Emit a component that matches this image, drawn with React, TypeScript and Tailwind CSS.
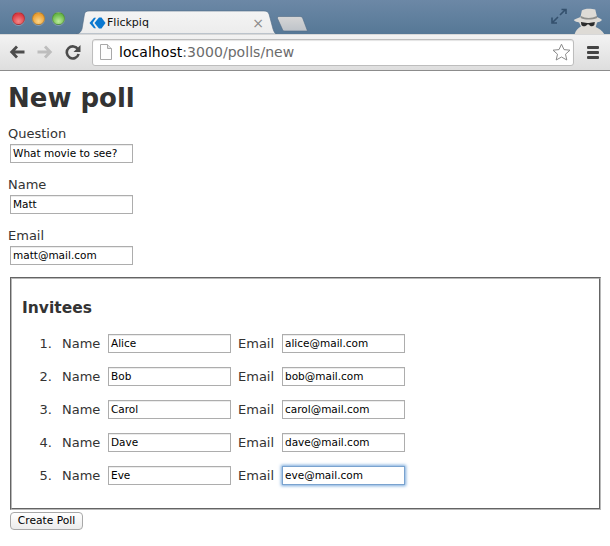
const FONT = "[font-family:'DejaVu_Sans',Verdana,sans-serif]";

function Light({ cls }: { cls: string }) {
  return <span className={`block w-[13px] h-[13px] rounded-full border border-black/20 shadow-[0_1px_0_rgba(255,255,255,0.25)] ${cls}`} />;
}

function TabShape() {
  return (
    <svg className="absolute left-0 top-0" width="201" height="24" viewBox="0 0 201 24">
      <defs>
        <linearGradient id="tabg" x1="0" y1="0" x2="0" y2="1">
          <stop offset="0" stopColor="#f4f4f4" />
          <stop offset="1" stopColor="#ececec" />
        </linearGradient>
      </defs>
      <path d="M0 24 C3 24 5 22 6 19 L8.5 4 C9 2 10.5 1 13 1 L188 1 C191 1 192 2 193 4 L197 19 C198 22 199 24 201 24 Z" fill="url(#tabg)" stroke="#4f6a85" strokeWidth="0.6" />
    </svg>
  );
}

function Favicon() {
  return (
    <svg width="17" height="12" viewBox="0 0 17 12">
      <path d="M0.5 6 L5 0.8 L7 0.8 L3.6 6 L7 11.2 L5 11.2 Z" fill="#0a78d0" />
      <path d="M5.5 6 L10 0.5 L12.5 0.5 L16.5 6 L12.5 11.5 L10 11.5 Z" fill="#0a78d0" />
    </svg>
  );
}

function NewTab() {
  return (
    <svg width="33" height="16" viewBox="0 0 33 16" className="ml-[-1px] mt-[16px]">
      <defs>
        <linearGradient id="ntab" x1="0" y1="0" x2="0" y2="1">
          <stop offset="0" stopColor="#d6d6d6" />
          <stop offset="1" stopColor="#bec3c9" />
        </linearGradient>
      </defs>
      <path d="M3 0.5 L24 0.5 C26 0.5 26.5 1.5 27 3 L31.5 15 L9 15 C7.5 15 7 14.5 6.5 13.5 L1.5 2.5 C1.2 1.2 2 0.5 3 0.5 Z" fill="url(#ntab)" stroke="#4f6a85" strokeWidth="0.6" />
    </svg>
  );
}

function Fullscreen() {
  return (
    <svg width="16" height="16" viewBox="0 0 16 16" fill="none">
      <path d="M9 7 L14 2 M10.5 1.5 H15 V6" stroke="#34506d" strokeWidth="1.6" />
      <path d="M7 9 L2 14 M1 9.5 V15 H6" stroke="#34506d" strokeWidth="1.6" />
    </svg>
  );
}

function Spy() {
  return (
    <svg width="34" height="26" viewBox="0 0 38 26" preserveAspectRatio="none" className="mt-[8px] mr-[4px]">
      <path d="M11 2.5 C14 0 22 0.5 26 1.5 L28 9 C30 10 33 11 33.5 12 C32 13.5 30 14 28 14.5 L26.5 19 C30 20.5 34 22.5 36 26 L3 26 C4 22.5 7 20 10 18.5 L8 14.5 C6 14 3 13.5 2 12 C3.5 11 7 10 9.5 9 Z" fill="#dedbd6" />
      <path d="M10 8 C15 10.5 22 10.5 27.8 8 L28.2 10 C22 12 15 12 9.6 10 Z" fill="#8f8f8c" />
      <path d="M10 14 L17 15 L19 15 L25.5 14 L25 17 C23 19 20 18.5 19 16.5 L17 16.5 C16 18.5 12 19 10.5 17 Z" fill="#2b2b2b" />
    </svg>
  );
}

function BackBtn() {
  return (
    <svg width="16" height="14" viewBox="0 0 16 14" fill="none">
      <path d="M15.5 7 H4 M8 1.5 L2.7 7 L8 12.5" stroke="#4c4c4c" strokeWidth="2.8" />
    </svg>
  );
}

function ForwardBtn() {
  return (
    <svg width="16" height="14" viewBox="0 0 16 14" fill="none">
      <path d="M0.5 7 H12 M8 1.5 L13.3 7 L8 12.5" stroke="#bdbdbd" strokeWidth="2.8" />
    </svg>
  );
}

function Reload() {
  return (
    <svg width="16" height="16" viewBox="0 0 16 16" fill="none">
      <path d="M13 5.4 A6 6 0 1 0 13.6 10" stroke="#4c4c4c" strokeWidth="2.6" />
      <path d="M15.5 1 V8 H8.5 Z" fill="#4c4c4c" />
    </svg>
  );
}

function PageIcon() {
  return (
    <svg width="12" height="16" viewBox="0 0 12 16" fill="none">
      <path d="M0.5 0.5 H7.5 L11.5 4.5 V15.5 H0.5 Z" fill="#fdfdfd" stroke="#a8a8a8" />
      <path d="M7.5 0.5 V4.5 H11.5" fill="#e4e4e4" stroke="#a8a8a8" />
    </svg>
  );
}

function Star() {
  return (
    <svg width="19" height="18" viewBox="0 0 19 18" fill="none">
      <path d="M9.5 1.2 L12 6.6 L18 7.2 L13.5 11.2 L14.8 17 L9.5 14 L4.2 17 L5.5 11.2 L1 7.2 L7 6.6 Z" fill="#fff" stroke="#8a8a8a" strokeWidth="1" />
    </svg>
  );
}

function Field({ value, focus }: { value: string; focus?: boolean }) {
  return (
    <div
      className={
        focus
          ? "w-[123px] h-[19px] bg-white border border-[#7aa3cf] shadow-[0_0_3px_1px_#79a9dc] px-[2px] pt-[1px] flex items-center text-[10.5px] text-black"
          : "w-[123px] h-[19px] bg-white border border-[#adadad] shadow-[inset_0_1px_0_#ececec] px-[2px] pt-[1px] flex items-center text-[10.5px] text-black"
      }
    >
      {value}
    </div>
  );
}

function Block({ label, value }: { label: string; value: string }) {
  return (
    <div className="h-[51px]">
      <div className="h-[20px] flex items-center text-[13px] text-[#333]">{label}</div>
      <div className="ml-[2px]">
        <Field value={value} />
      </div>
    </div>
  );
}

const invitees = [
  ["Alice", "alice@mail.com"],
  ["Bob", "bob@mail.com"],
  ["Carol", "carol@mail.com"],
  ["Dave", "dave@mail.com"],
  ["Eve", "eve@mail.com"],
];

export default function App() {
  return (
    <div className={`w-[610px] h-[546px] bg-white overflow-hidden ${FONT}`}>
      <div className="h-[34px] bg-gradient-to-b from-[#6c88a6] to-[#567896] flex items-start">
        <div className="flex gap-[7px] pl-[12px] pt-[12px] w-[76px]">
          <Light cls="bg-[radial-gradient(circle_at_50%_75%,#f58a8a,#dc3a42_70%)]" />
          <Light cls="bg-[radial-gradient(circle_at_50%_75%,#fcd68a,#ea9f32_70%)]" />
          <Light cls="bg-[radial-gradient(circle_at_50%_75%,#bdec9c,#68b848_70%)]" />
        </div>
        <div className="relative w-[201px] h-[24px] mt-[10px] shrink-0">
          <TabShape />
          <div className="relative flex items-center h-full pl-[13px] pr-[13px] pt-[2px]">
            <Favicon />
            <span className="ml-[1px] text-[11px] text-[#111] flex-1">Flickpiq</span>
            <span className="text-[14px] leading-none text-[#8a8a8a]">×</span>
          </div>
        </div>
        <NewTab />
        <div className="flex-1 flex justify-end items-start">
          <div className="mt-[8px] mr-[5px]"><Fullscreen /></div>
          <Spy />
        </div>
      </div>
      <div className="h-[37px] bg-gradient-to-b from-[#f3f3f3] to-[#dedede] border-b border-[#8c8c8c] flex items-center pl-[9px] pr-[9px] shadow-[inset_0_1px_0_#d8d8d8]">
        <BackBtn />
        <div className="ml-[12px]"><ForwardBtn /></div>
        <div className="ml-[12px]"><Reload /></div>
        <div className="ml-[11px] w-[482px] h-[27px] bg-white border border-[#bdbdbd] rounded-[3px] flex items-center pl-[7px] pr-[2px] text-[14px] shadow-[inset_0_1px_1px_#e4e4e4]">
          <PageIcon />
          <span className="ml-[7px] flex-1 text-[#6b6b6b] tracking-[0.05px]">
            <span className="text-black">localhost</span>:3000/polls/new
          </span>
          <Star />
        </div>
        <div className="ml-[13px] w-[12px] flex flex-col gap-[2px]">
          <span className="block h-[3px] bg-[#444] rounded-[1px]" />
          <span className="block h-[3px] bg-[#444] rounded-[1px]" />
          <span className="block h-[3px] bg-[#444] rounded-[1px]" />
        </div>
      </div>
      <div className="pl-[8px]">
        <h1 className="h-[53px] flex items-center text-[26px] font-bold text-[#333] leading-none">New poll</h1>
        <Block label="Question" value="What movie to see?" />
        <Block label="Name" value="Matt" />
        <Block label="Email" value="matt@mail.com" />
        <div className="ml-[2px] w-[591px] h-[233px] border-2 border-[#b8b8b8] [border-style:groove] pl-[10px] pt-[19px]">
          <h2 className="h-[22px] flex items-center text-[15.5px] font-bold text-[#333] leading-none">Invitees</h2>
          <ol className="mt-[14px] flex flex-col gap-[14px] text-[13px] text-[#333]">
            {invitees.map(([name, email], i) => (
              <li key={name} className="flex items-center h-[19px]">
                <span className="w-[30px] text-right">{i + 1}.</span>
                <span className="ml-[10px] w-[46px]">Name</span>
                <Field value={name} />
                <span className="ml-[7px] w-[44px]">Email</span>
                <Field value={email} focus={i === 4} />
              </li>
            ))}
          </ol>
        </div>
        <button className="ml-[2px] mt-[2px] w-[73px] h-[18px] rounded-[4px] border border-[#a8a8a8] bg-gradient-to-b from-white to-[#ececec] text-[10.7px] text-black leading-none flex items-center justify-center">
          Create Poll
        </button>
      </div>
    </div>
  );
}
